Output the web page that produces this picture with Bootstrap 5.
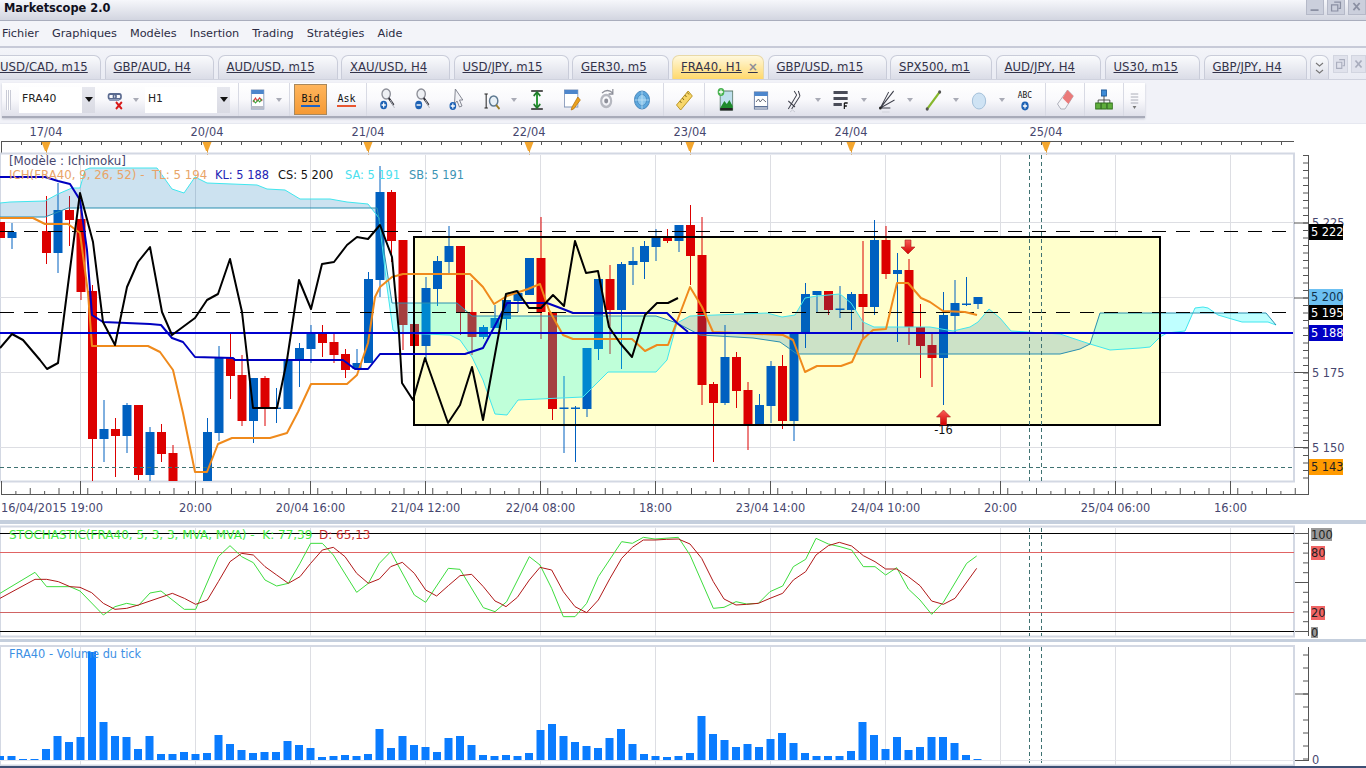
<!DOCTYPE html>
<html lang="fr">
<head>
    <meta charset="UTF-8">
    <meta name="viewport" content="width=device-width, initial-scale=1.0">
    <title>Marketscope 2.0</title>
    <link rel="stylesheet" href="https://cdn.jsdelivr.net/npm/bootstrap@5.3.0/dist/css/bootstrap.min.css">
    <style>
        html, body { height: 768px; overflow: hidden; }
        body { background: #fff; font-family: "DejaVu Sans", "Liberation Sans", sans-serif; font-size: 11.3px; color: #2c2c44; }
        .mk-title { height: 21px; background: linear-gradient(#f6f7fb, #d2d5e0); border-bottom: 1px solid #a9adbd; padding-left: 4px; }
        .mk-title b { font: bold 11.4px "DejaVu Sans", sans-serif; color: #10101c; padding-top: 1px; }
        .mk-winbtn { width: 18px; height: 15px; background: #cbcfdc; border: 1px solid #b5b9c8; border-top: 0; margin-left: 3px; }
        .mk-winbtn svg { width: 100%; height: 100%; display: block; }
        .mk-menu { height: 27px; background: #f3f4f9; border-bottom: 2px solid #c7cad8; padding: 1px 0 0 2px; gap: 13px; }
        .mk-tabs { height: 32px; background: linear-gradient(#f3f4f9, #e9ebf3); border-bottom: 1px solid #cfd2de; padding-top: 7px; }
        .mk-tab { height: 25px; margin-right: 3.5px; border: 1px solid #c9ccd9; border-bottom: 0; border-radius: 7px 7px 0 0; background: linear-gradient(#fafbfd, #d9dbe6); color: #33334a; padding: 0 0 0 8px; white-space: nowrap; flex: none; font-size: 11.7px; }
        .mk-tab.active { background: linear-gradient(#fff8dc, #ffd766); border-color: #e8d9a8; color: #33334a; }
        .mk-tab i { font-style: normal; font-weight: bold; color: #8c8c98; margin-left: 6px; }
        .mk-chev { width: 19px; padding: 0; }
        .mk-chev svg { width: 9px; height: 16px; }
        .mk-first { margin-left: -9px; width: 110px; }
        .mk-tbwrap { height: 43px; background: #f1f2f8; padding: 3px 0 0 2px; }
        .mk-toolbar { width: 1143px; height: 35px; background: linear-gradient(#fff 0, #f9f9fc 50%, #dfe0ea 100%); border-bottom: 2px solid #a8abb9; box-shadow: 0 1px 2px #c4c6d2; }
        .mk-grip { width: 17px; height: 100%; }
        .mk-grip::before { content: ""; display: block; width: 5px; height: 20px; margin-left: 4px; background: repeating-linear-gradient(90deg, #c9cbd6 0 1px, #fff 1px 2px); }
        .mk-combo { height: 26px; background: #fff; flex: none; padding-left: 3px; color: #222; font-size: 10.8px; }
        .mk-combo span { width: 13px; height: 26px; margin-left: auto; background: linear-gradient(#e6e7ee, #d9dae3); display: flex; align-items: center; justify-content: center; }
        .mk-combo span::after { content: ""; border: 4px solid transparent; border-top: 5px solid #111; border-bottom: 0; }
        .mk-sep { width: 1px; height: 33px; background: #d8dae4; flex: none; }
        .mk-it { flex: none; height: 33px; display: flex; align-items: center; justify-content: center; }
        .mk-it svg { width: 20px; height: 26px; display: block; }
        .mk-caret { flex: none; width: 12px; height: 33px; display: flex; align-items: center; justify-content: center; }
        .mk-caret::after { content: ""; border: 3px solid transparent; border-top: 4px solid #a9abb6; border-bottom: 0; }
        .w-22 { width: 22px; } .w-34 { width: 34px; } .w-35 { width: 35px; } .w-38 { width: 38px; } .w-40 { width: 40px; }
        .mk-wide { width: 20px; }
        .mk-mid { width: 18px; }
        .mk-narrow { width: 10px; }
        .mk-l2 { margin-left: 2px; } .mk-l3 { margin-left: 3px; } .mk-l4 { margin-left: 4px; } .mk-l10 { margin-left: 10px; }
        .mk-bid { width: 33px; height: 31px; padding: 0; margin: 0 0 0 4px; flex: none; background: linear-gradient(#ffb55c, #f59a35); border: 1px solid #a9885c; border-radius: 0; line-height: 1; }
        .mk-ask { width: 39px; height: 33px; flex: none; }
        .mk-bidtxt { font: 10px "DejaVu Sans Mono", monospace; color: #111; padding-bottom: 1px; }
        .mk-bid .mk-bidtxt { border-bottom: 2px solid #1c62c4; }
        .mk-ask .mk-bidtxt { border-bottom: 2px solid #e8552f; }
        .mk-chart { display: block; width: 1366px; background: #fff; }
        .mk-chart text { font: 11.4px "DejaVu Sans", sans-serif; fill: #46466e; }
        .mk-chart text.mk-model { font-size: 11.8px; }
        .mk-chart text.mk-stleg { font-size: 12px; }
        .mk-bar { height: 4px; background: #c5cfdd; }
        .mk-bar2 { height: 3px; background: #c5cfdd; }
    </style>
</head>
<body>
    <svg width="0" height="0" class="position-absolute">
        <defs>
            <linearGradient id="redg" x1="0" x2="0" y1="0" y2="1"><stop offset="0" stop-color="#f8605a"/><stop offset="1" stop-color="#d40000"/></linearGradient>
        </defs>
        <symbol id="i-link" viewBox="0 0 24 26" preserveAspectRatio="none"><g fill="none" stroke="#5a6a90" stroke-width="2"><rect x="3" y="7" width="9" height="5" rx="2"/><rect x="9" y="7" width="9" height="5" rx="2"/></g><rect x="4" y="12" width="12" height="2" fill="#8d9ab8"/><path d="M12 15l7 7M19 15l-7 7" stroke="#d81818" stroke-width="2.4"/></symbol>
        <symbol id="i-win" viewBox="0 0 24 26" preserveAspectRatio="none"><rect x="4" y="3" width="15" height="19" fill="#fff" stroke="#7f93b5"/><rect x="4" y="3" width="15" height="4" fill="#4d86cc"/><path d="M6 15l3-4 2 3 3-3 3 3" fill="none" stroke="#d83a3a" stroke-width="1.3"/><path d="M6 13l3 3 3-3 2 2 3-3" fill="none" stroke="#3aa640" stroke-width="1.1"/><rect x="4" y="19" width="15" height="3" fill="#b9bdc9"/></symbol>
        <symbol id="i-zin" viewBox="0 0 24 26" preserveAspectRatio="none"><circle cx="11" cy="7" r="5" fill="#eef0f4" stroke="#8d8f98" stroke-width="1.6"/><path d="M14 11l6 7" stroke="#303038" stroke-width="2.2"/><path d="M16 13l5 8" stroke="#b5b8c2" stroke-width="1"/><circle cx="8" cy="18" r="4.2" fill="#1d62b5"/><path d="M5.5 18h5M8 15.5v5" stroke="#fff" stroke-width="1.4"/></symbol>
        <symbol id="i-zout" viewBox="0 0 24 26" preserveAspectRatio="none"><circle cx="11" cy="7" r="5" fill="#eef0f4" stroke="#8d8f98" stroke-width="1.6"/><path d="M14 11l6 7" stroke="#303038" stroke-width="2.2"/><path d="M16 13l5 8" stroke="#b5b8c2" stroke-width="1"/><circle cx="8" cy="18" r="4.2" fill="#1d62b5"/><path d="M5.5 18h5" stroke="#fff" stroke-width="1.4"/></symbol>
        <symbol id="i-cur" viewBox="0 0 24 26" preserveAspectRatio="none"><path d="M10 2l9 11h-4l3 6-3 1-3-6-3 3z" fill="#f2f3f7" stroke="#7b7e8a"/><circle cx="7" cy="19" r="4" fill="#1d62b5"/><path d="M4.5 19h5M7 16.5v5" stroke="#fff" stroke-width="1.4"/></symbol>
        <symbol id="i-izoom" viewBox="0 0 24 26" preserveAspectRatio="none"><path d="M5 7v14M3 7h4M3 21h4" stroke="#222" stroke-width="1.2" fill="none"/><circle cx="14" cy="14" r="5" fill="#e8f0f7" stroke="#5d7890" stroke-width="1.7"/><path d="M17 18l4 4" stroke="#9a7b22" stroke-width="2"/></symbol>
        <symbol id="i-ibar" viewBox="0 0 24 26" preserveAspectRatio="none"><path d="M5 4h14M5 22h14" stroke="#222" stroke-width="1.6"/><path d="M12 5v16" stroke="#2e9a3a" stroke-width="2.4"/><path d="M8 9l4-4 4 4M8 17l4 4 4-4" fill="none" stroke="#1f7a2a" stroke-width="1.8"/></symbol>
        <symbol id="i-wkey" viewBox="0 0 24 26" preserveAspectRatio="none"><rect x="3" y="3" width="16" height="17" fill="#fff" stroke="#7f93b5"/><rect x="3" y="3" width="16" height="4" fill="#4d86cc"/><path d="M19 10l3 3-8 9-3 1 1-3z" fill="#eba21f" stroke="#b3700c" stroke-width=".8"/></symbol>
        <symbol id="i-eye" viewBox="0 0 24 26" preserveAspectRatio="none"><circle cx="11" cy="14" r="6" fill="none" stroke="#b6b8c0" stroke-width="2.6"/><circle cx="11" cy="14" r="2.4" fill="#8d8f99"/><path d="M6 6c4-3 9-3 13 0M19 2v5h-5" fill="none" stroke="#8d8f99" stroke-width="1.5"/></symbol>
        <symbol id="i-globe" viewBox="0 0 24 26" preserveAspectRatio="none"><circle cx="12" cy="13" r="9" fill="#5da7dd" stroke="#3c7fb6"/><circle cx="12" cy="13" r="5.5" fill="#8cc6ec" stroke="#3c7fb6" stroke-width=".7"/><path d="M3 13h18M12 4v18" stroke="#c5e3f6" stroke-width=".8"/></symbol>
        <symbol id="i-ruler" viewBox="0 0 24 26" preserveAspectRatio="none"><path d="M3 18L17 4l5 5L8 23z" fill="#f7d66a" stroke="#b78f1c"/><path d="M7 14l2 2M10 11l2 2M13 8l2 2M16 5.500l2 2" stroke="#7a5f10"/></symbol>
        <symbol id="i-pic" viewBox="0 0 24 26" preserveAspectRatio="none"><rect x="5" y="4" width="15" height="19" fill="#bfe0ee" stroke="#5a7a68"/><path d="M5 21l5-7 3 3 3-4 4 6v2H5z" fill="#1e8a2c"/><rect x="5" y="21" width="15" height="2.500" fill="#222"/><circle cx="6" cy="5" r="4" fill="#47b24f"/><path d="M3.500 5h5M6 2.500v5" stroke="#fff" stroke-width="1.3"/></symbol>
        <symbol id="i-wchart" viewBox="0 0 24 26" preserveAspectRatio="none"><rect x="4" y="5" width="16" height="17" fill="#fff" stroke="#5a6f95"/><rect x="4" y="5" width="16" height="4" fill="#4d86cc"/><path d="M6 15l3-3 2 3 3-3 4 3" fill="none" stroke="#5a5f6e"/><rect x="4" y="19" width="16" height="1.500" fill="#5a6f95"/></symbol>
        <symbol id="i-fork" viewBox="0 0 24 26" preserveAspectRatio="none"><path d="M4 22L14 8M8 22l10-13M4 14l8 6M11 4l3 4M16 4l2 5" fill="none" stroke="#3d3f4a" stroke-width="1.2"/><path d="M6 25l3-2 3 2" fill="none" stroke="#c5c7d0"/></symbol>
        <symbol id="i-fib" viewBox="0 0 24 26" preserveAspectRatio="none"><rect x="3" y="4" width="17" height="3" fill="#4a4c58"/><rect x="3" y="10" width="17" height="3" fill="#4a4c58"/><rect x="3" y="16" width="10" height="3" fill="#4a4c58"/><path d="M16 16h4M16 16v6M16 19h3" stroke="#111" stroke-width="1.4" fill="none"/></symbol>
        <symbol id="i-fan" viewBox="0 0 24 26" preserveAspectRatio="none"><path d="M4 21L20 4M4 21L14 5M4 21L21 13M4 21h12" fill="none" stroke="#3d3f4a" stroke-width="1.1"/><circle cx="4" cy="21" r="1.600" fill="#222"/><path d="M6 25h9" stroke="#cfd1d9"/></symbol>
        <symbol id="i-line" viewBox="0 0 24 26" preserveAspectRatio="none"><path d="M5 22L20 5" stroke="#86b72c" stroke-width="2.6"/><circle cx="5" cy="22" r="1.800" fill="#555"/><circle cx="20" cy="5" r="1.800" fill="#555"/></symbol>
        <symbol id="i-circ" viewBox="0 0 24 26" preserveAspectRatio="none"><circle cx="12" cy="14" r="8" fill="#cfe3f4" stroke="#9fbcd6"/></symbol>
        <symbol id="i-plusb" viewBox="0 0 24 26" preserveAspectRatio="none"><circle cx="12" cy="19" r="4.400" fill="#1d62b5"/><path d="M9.500 19h5M12 16.500v5" stroke="#fff" stroke-width="1.4"/></symbol>
        <symbol id="i-eras" viewBox="0 0 24 26" preserveAspectRatio="none"><path d="M15 3l7 6-10 13H7l-4-5z" fill="#f5f5f8" stroke="#a9abb6"/><path d="M15 3l7 6-6 8-7-6z" fill="#ea7a7a"/></symbol>
        <symbol id="i-org" viewBox="0 0 24 26" preserveAspectRatio="none"><rect x="9" y="3" width="6" height="6" fill="#3d8ad6" stroke="#1f5a9a"/><path d="M12 9v4M5 16v-3h14v3M12 13v3" fill="none" stroke="#444"/><g fill="#5fae3c" stroke="#2f6f1a"><rect x="2" y="16" width="6" height="6"/><rect x="9" y="16" width="6" height="6"/><rect x="16" y="16" width="6" height="6"/></g></symbol>
        <symbol id="i-over" viewBox="0 0 24 26" preserveAspectRatio="none"><path d="M6 7h12M6 10h12M6 13h12M6 16h12" stroke="#9a9ca8"/><path d="M9 19h6l-3 3z" fill="#777"/></symbol>
    </svg>

    <div class="mk-title d-flex align-items-start">
        <b>Marketscope 2.0</b>
        <div class="d-flex ms-auto">
            <div class="mk-winbtn"><svg viewBox="0 0 18 15"><rect x="4" y="10" width="9" height="2" fill="#8b90a3"/></svg></div>
            <div class="mk-winbtn"><svg viewBox="0 0 18 15"><path d="M7 2h7v7h-2M4 5h7v7H4z" fill="none" stroke="#8b90a3" stroke-width="1.400"/></svg></div>
            <div class="mk-winbtn"><svg viewBox="0 0 18 15"><path d="M5 3l7 8M12 3l-7 8" stroke="#8b90a3" stroke-width="2"/></svg></div>
        </div>
    </div>

    <div class="mk-menu d-flex align-items-center">
        <span>Fichier</span><span>Graphiques</span><span>Modèles</span><span>Insertion</span><span>Trading</span><span>Stratégies</span><span>Aide</span>
    </div>

    <div class="mk-tabs d-flex overflow-hidden">
        <a class="mk-tab mk-first d-flex align-items-center">USD/CAD, m15</a>
        <a class="mk-tab d-flex align-items-center" style="width:109.5px">GBP/AUD, H4</a>
        <a class="mk-tab d-flex align-items-center" style="width:120px">AUD/USD, m15</a>
        <a class="mk-tab d-flex align-items-center" style="width:109px">XAU/USD, H4</a>
        <a class="mk-tab d-flex align-items-center" style="width:115px">USD/JPY, m15</a>
        <a class="mk-tab d-flex align-items-center" style="width:96.5px">GER30, m5</a>
        <a class="mk-tab active d-flex align-items-center" style="width:92px">FRA40, H1<i>×</i></a>
        <a class="mk-tab d-flex align-items-center" style="width:119px">GBP/USD, m15</a>
        <a class="mk-tab d-flex align-items-center" style="width:102px">SPX500, m1</a>
        <a class="mk-tab d-flex align-items-center" style="width:105.5px">AUD/JPY, H4</a>
        <a class="mk-tab d-flex align-items-center" style="width:95.5px">US30, m15</a>
        <a class="mk-tab d-flex align-items-center" style="width:103px">GBP/JPY, H4</a>
        <a class="mk-tab mk-chev d-flex align-items-center justify-content-center"><svg viewBox="0 0 9 16"><path d="M1 3l3.500 3 3.500-3M1 10l3.500 3 3.500-3" fill="none" stroke="#777" stroke-width="1.100"/></svg></a>
        <div class="mk-winbtn ms-0" style="width:15px;height:18px;background:#e0e2ec;border:1px solid #d2d5e0"><svg viewBox="0 0 15 18"><path d="M6 4h6v7h-2M3 7h6v7H3z" fill="none" stroke="#a9adbd" stroke-width="1.300"/></svg></div>
        <div class="mk-winbtn" style="width:15px;height:18px;background:#e0e2ec;border:1px solid #d2d5e0"><svg viewBox="0 0 15 18"><path d="M4 5l7 8M11 5l-7 8" stroke="#a9adbd" stroke-width="2"/></svg></div>
    </div>

    <div class="mk-tbwrap">
        <div class="mk-toolbar d-flex align-items-center">
            <div class="mk-grip d-flex align-items-center"></div>
            <div class="mk-combo d-flex align-items-center" style="width:76px">FRA40<span></span></div>
            <div class="mk-it w-22 mk-l10"><svg><use href="#i-link"/></svg></div>
            <div class="mk-caret mk-mid"></div>
            <div class="mk-combo d-flex align-items-center" style="width:85px">H1<span></span></div>
            <div class="mk-sep mx-2"></div>
            <div class="mk-it w-22"><svg><use href="#i-win"/></svg></div>
            <div class="mk-caret mk-wide"></div>
            <div class="mk-sep"></div>
            <button class="btn mk-bid d-flex align-items-center justify-content-center"><span class="mk-bidtxt">Bid</span></button>
            <div class="mk-ask d-flex align-items-center justify-content-center"><span class="mk-bidtxt">Ask</span></div>
            <div class="mk-sep"></div>
            <div class="mk-it w-35 mk-l2"><svg><use href="#i-zin"/></svg></div>
            <div class="mk-it w-35"><svg><use href="#i-zout"/></svg></div>
            <div class="mk-it w-35"><svg><use href="#i-cur"/></svg></div>
            <div class="mk-it w-35"><svg><use href="#i-izoom"/></svg></div>
            <div class="mk-caret mk-narrow"></div>
            <div class="mk-it w-35"><svg><use href="#i-ibar"/></svg></div>
            <div class="mk-it w-35"><svg><use href="#i-wkey"/></svg></div>
            <div class="mk-it w-35"><svg><use href="#i-eye"/></svg></div>
            <div class="mk-it w-35"><svg><use href="#i-globe"/></svg></div>
            <div class="mk-sep mk-l4"></div>
            <div class="mk-it w-40"><svg><use href="#i-ruler"/></svg></div>
            <div class="mk-sep"></div>
            <div class="mk-it w-35 mk-l3"><svg><use href="#i-pic"/></svg></div>
            <div class="mk-it w-35"><svg><use href="#i-wchart"/></svg></div>
            <div class="mk-it w-34"><svg><use href="#i-fork"/></svg></div>
            <div class="mk-caret"></div>
            <div class="mk-it w-34"><svg><use href="#i-fib"/></svg></div>
            <div class="mk-caret"></div>
            <div class="mk-it w-34"><svg><use href="#i-fan"/></svg></div>
            <div class="mk-caret"></div>
            <div class="mk-it w-34"><svg><use href="#i-line"/></svg></div>
            <div class="mk-caret"></div>
            <div class="mk-it w-34"><svg><use href="#i-circ"/></svg></div>
            <div class="mk-caret"></div>
            <div class="mk-it w-34"><svg viewBox="0 0 24 26" preserveAspectRatio="none"><text x="12" y="11" text-anchor="middle" font-family="DejaVu Sans Mono" font-size="9.500" fill="#111">ABC</text><use href="#i-plusb"/></svg></div>
            <div class="mk-sep mk-l3"></div>
            <div class="mk-it w-38"><svg><use href="#i-eras"/></svg></div>
            <div class="mk-sep"></div>
            <div class="mk-it w-38"><svg><use href="#i-org"/></svg></div>
            <div class="mk-sep"></div>
            <div class="mk-it flex-fill"><svg style="width:15px"><use href="#i-over"/></svg></div>
        </div>
    </div>

    <svg id="main" class="mk-chart" height="397" viewBox="0 123 1366 397">
        <defs><clipPath id="clipMain"><rect x="0" y="155" width="1294" height="326"/></clipPath></defs>
        <g id="topAxis"></g>
        <rect x="0" y="153.500" width="1294" height="328" fill="none" stroke="#d3d8e3" stroke-width="2"/>
        <g id="mainPlot" clip-path="url(#clipMain)"></g>
        <g id="mainAxis"></g>
        <text x="9" y="165" class="mk-model">[Modèle : Ichimoku]</text>
        <text x="9" y="179" class="mk-model" style="fill:#e8a468">ICH(FRA40, 9, 26, 52) -&#160;&#160;TL: 5 194</text>
        <text x="215" y="179" style="fill:#2323b4">KL: 5 188</text>
        <text x="278" y="179" style="fill:#111">CS: 5 200</text>
        <text x="345" y="179" style="fill:#4ae0ee">SA: 5 191</text>
        <text x="409" y="179" style="fill:#3c94b4">SB: 5 191</text>
        <path d="M905 240h6v7h4l-7 7-7-7h4z" fill="url(#redg)" stroke="#b02020" stroke-width=".6"/>
        <path d="M940.500 425v-8h-4l7-7 7 7h-4v8z" fill="url(#redg)" stroke="#b02020" stroke-width=".6"/>
        <text x="943.500" y="434" text-anchor="middle" style="fill:#111">-16</text>
    </svg>
    <div class="mk-bar"></div>
    <svg id="stoch" class="mk-chart" height="115" viewBox="0 524 1366 115">
        <g id="stochPlot"></g>
        <text x="9" y="539" class="mk-stleg" style="fill:#45e845">STOCHASTIC(FRA40, 5, 3, 3, MVA, MVA) -&#160;&#160;K: 77,39</text>
        <text x="319" y="539" class="mk-stleg" style="fill:#c83030">D: 65,13</text>
    </svg>
    <div class="mk-bar2"></div>
    <svg id="vol" class="mk-chart" height="126" viewBox="0 642 1366 126">
        <g id="volPlot"></g>
        <text x="9" y="658" style="fill:#3d8fe4">FRA40 - Volume du tick</text>
    </svg>

    <script src="https://cdn.jsdelivr.net/npm/bootstrap@5.3.0/dist/js/bootstrap.bundle.min.js"></script>
    <script>
        const GRID_X = [80.5, 195.5, 310.5, 425.5, 540.5, 655.5, 770.5, 885.5, 1000.5, 1115.5, 1230.5];

        // candles: [index, body top, body bottom, wick top, wick bottom, colour]
        const candles = [
            [0,222,238,222,238,'r'],[1,232,238,223,249,'b'],[4,231,253,196,264,'r'],[5,210,253,183,273,'b'],[6,210,220,196,246,'r'],
            [7,219,292,210,300,'r'],[8,291,439,285,481,'r'],[9,429,439,400,462,'b'],[10,429,436,418,477,'r'],[11,405,436,403,453,'b'],
            [12,405,475,405,480,'r'],[13,432,475,427,481,'b'],[14,432,454,424,462,'r'],[15,453,481,445,481,'r'],[18,432,481,418,481,'b'],
            [19,358,433,346,441,'b'],[20,358,376,333,399,'r'],[21,375,421,355,426,'r'],[22,378,421,378,443,'b'],[23,378,408,376,426,'r'],
            [24,407.500,409,388,423,'b'],[25,360,409,360,409,'b'],[26,348,360,343,387,'b'],[27,333,349,325,363,'b'],[28,333,343,325,357,'r'],
            [29,342,355,333,363,'r'],[30,354,370,349,378,'r'],[31,363,369,349,369,'b'],[32,279,363,272,363,'b'],[33,192,280,166,297,'b'],
            [34,192,241,190,262,'r'],[35,240,325,240,350,'r'],[36,324,346,324,352,'r'],[37,288,346,277,360,'b'],[38,261,289,256,306,'b'],
            [39,246,262,226,273,'b'],[40,246,312,246,335,'r'],[41,312,337,280,355,'r'],[42,327,337,325,339,'b'],[43,318,328,305,328,'b'],
            [44,300,319,300,330,'b'],[45,293,301,290,312,'b'],[46,258,295,258,295,'b'],[47,258,312,217,339,'r'],[48,312,409,312,420,'r'],
            [49,407.500,409,376,453,'b'],[50,407.500,409,406,462,'b'],[51,348,409,348,417,'b'],[52,279,349,279,360,'b'],[53,279,310,265,354,'r'],
            [54,264,310,262,369,'b'],[55,261,265,247,285,'b'],[56,246,262,241,279,'b'],[57,237,247,229,261,'b'],[58,237,241,229,243,'r'],
            [59,225,241,225,252,'b'],[60,225,256,205,285,'r'],[61,255,385,217,405,'r'],[62,384,403,382,462,'r'],[63,357,403,325,405,'b'],
            [64,357,391,352,408,'r'],[65,390,424,382,450,'r'],[66,405,424,394,426,'b'],[67,366,406,361,423,'b'],[68,366,421,355,429,'r'],
            [69,332,421,332,441,'b'],[70,294,332,283,348,'b'],[71,291,295,291,312,'b'],[72,291,310,291,315,'r'],[73,308.500,310,286,318,'b'],
            [74,294,310,292,330,'b'],[75,294,307,241,339,'r'],[76,240,307,220,315,'b'],[77,240,274,226,279,'r'],[78,270,274,253,342,'b'],
            [79,270,327,259,345,'r'],[80,327,346,304,378,'r'],[81,345,358,334,387,'r'],[82,315,358,292,405,'b'],[83,303,316,280,332,'b'],
            [84,303.500,305,277,306,'b'],[85,297,304,297,309,'b']
        ];

        const pts = a => a.map(p => p.join(',')).join(' ');
        const pl = (a, colour, w) => `<polyline points="${pts(a)}" fill="none" stroke="${colour}" stroke-width="${w}" stroke-linejoin="round"/>`;
        const ln = (x1, y1, x2, y2, colour, extra) => `<line x1="${x1}" y1="${y1}" x2="${x2}" y2="${y2}" stroke="${colour}" ${extra || ''}/>`;
        const gridV = (y1, y2) => GRID_X.map(x => ln(x, y1, x, y2, '#dddee3')).join('');
        const dashV = (y1, y2) => [1029.5, 1041.5].map(x => ln(x, y1, x, y2, '#3f7272', 'stroke-dasharray="4 3"')).join('');

        // clouds
        const sa1 = [[0,203],[10,202],[45,201],[58,194],[72,188],[80,188],[85,170],[90,168],[157,168],[172,189],[184,193],[195,177],[207,183],[257,185],[267,189],[285,190],[300,199],[330,199],[347,202],[368,204],[379,218]];
        const sb1 = [[0,217],[45,217],[58,212],[68,208],[377,208],[379,218]];
        const sb2 = [[379,218],[392,303],[457,303],[472,316],[656,316],[677,323]];
        const sa2 = [[379,218],[387,287],[393,330],[397,333],[450,335],[460,340],[472,357],[483,380],[495,414],[507,415],[518,400],[583,397],[608,372],[656,372],[667,360],[677,323]];
        const sa3 = [[677,323],[690,316],[767,313],[782,317],[795,315],[805,298],[817,296],[840,294],[851,303],[863,322],[874,327],[930,327],[953,331],[970,327],[978,322],[989,309],[1000,318],[1011,331],[1060,334],[1090,344]];
        const sb3 = [[677,323],[700,335],[753,338],[780,342],[797,354],[1060,354],[1080,349],[1090,344]];
        const sb4 = [[1090,344],[1100,313],[1266,313],[1276,325]];
        const sa4 = [[1090,344],[1110,350],[1140,348],[1150,347],[1160,337],[1167,333],[1185,331],[1195,308],[1203,307],[1208,308],[1218,315],[1242,322],[1268,322],[1276,325]];
        const poly = (a, b, fill) => `<polygon points="${pts(a.concat(b.slice().reverse()))}" fill="${fill}"/>`;

        const black = [[0,348],[12,334],[23,340],[40,360],[47,369],[58,363],[69,277],[80,193],[93,242],[103,322],[115,345],[127,287],[138,262],[150,247],[162,312],[172,335],[195,318],[207,300],[218,294],[230,259],[242,312],[253,408],[277,408],[287,360],[299,280],[311,309],[322,264],[334,262],[347,245],[357,237],[368,239],[380,225],[392,257],[399,333],[402,383],[413,400],[425,358],[448,423],[460,405],[472,367],[483,420],[506,294],[517,291],[529,308],[541,308],[553,295],[564,306],[575,241],[586,273],[598,271],[609,327],[620,343],[632,357],[645,315],[657,303],[668,303],[678,298]];
        const blue = [[0,177],[45,177],[58,181],[70,184],[80,200],[87,250],[92,315],[103,322],[150,324],[161,325],[172,338],[183,342],[195,357],[233,358],[235,360],[343,360],[355,369],[368,369],[380,354],[465,354],[483,348],[507,303],[547,303],[563,309],[573,313],[667,313],[677,323],[688,332]];
        const orange = [[0,218],[33,218],[45,224],[68,224],[80,233],[88,293],[92,346],[148,346],[160,352],[173,370],[183,413],[195,472],[207,472],[218,444],[232,438],[270,438],[287,433],[298,412],[311,384],[347,384],[357,375],[368,343],[375,297],[380,287],[392,277],[403,274],[470,274],[483,287],[494,304],[507,296],[528,289],[540,284],[549,310],[563,335],[573,339],[632,339],[645,351],[657,345],[668,345],[690,287],[702,307],[713,332],[783,335],[793,340],[805,372],[817,366],[841,366],[852,362],[862,340],[873,330],[886,329],[897,283],[908,283],[921,298],[930,302],[943,311],[965,312],[977,315]];

        let h = gridV(155, 481);
        [222.5, 297.5, 372.5, 447.5].forEach(y => h += ln(0, y, 1294, y, '#dddee3'));
        h += '<rect x="414" y="237" width="746" height="188" fill="#ffffcc"/>';
        candles.forEach(c => {
            const x = 11.5 * c[0] + 0.5, col = c[5] === 'r' ? '#dc0000' : '#0060c0';
            h += ln(x, c[3], x, c[4], col);
            h += `<rect x="${x - 4.5}" y="${c[1]}" width="9" height="${c[2] - c[1]}" fill="${col}"/>`;
        });
        h += poly(sa1, sb1, 'rgba(0,110,180,.2)') + poly(sb2, sa2, 'rgba(0,255,255,.25)');
        h += poly(sa3, sb3, 'rgba(0,110,180,.2)') + poly(sb4, sa4, 'rgba(0,255,255,.25)');
        [[sa1, sa2, sa3, sa4], [sb1, sb2, sb3, sb4]].forEach((set, k) => set.forEach(s => h += pl(s, k ? '#2a8fb0' : '#40e6ee', 1)));
        h += '<rect x="414" y="237" width="746" height="188" fill="none" stroke="#000" stroke-width="2"/>';
        h += ln(0, 231.5, 1291, 231.5, '#000', 'stroke-dasharray="14 10"');
        h += ln(0, 312.5, 1291, 312.5, '#000', 'stroke-dasharray="14 10"');
        h += ln(0, 467.5, 1294, 467.5, '#3f7272', 'stroke-dasharray="4 3"');
        h += dashV(155, 481);
        h += pl(orange, '#ef8a1c', 2) + ln(0, 333, 1293, 333, '#0000d0', 'stroke-width="2"') + pl(blue, '#0000c0', 2) + pl(black, '#000', 2);
        document.getElementById('mainPlot').innerHTML = h;

        // top date strip
        h = ln(1, 141.5, 1294, 141.5, '#555');
        for (let x = 1.5; x < 1294; x += 20) h += ln(x, 141, x, 145, '#555');
        h += ln(1.5, 141, 1.5, 154, '#555');
        [['17/04',46],['20/04',207],['21/04',368],['22/04',529],['23/04',690],['24/04',851],['25/04',1046]].forEach(d => {
            h += `<text x="${d[1]}" y="136" text-anchor="middle">${d[0]}</text>`;
            h += `<path d="M${d[1] - 4.5} 142h9l-3.5 9h-2z" fill="#f4a62e"/>` + ln(d[1] + 0.5, 150, d[1] + 0.5, 155, '#e09a30');
        });
        h = '<rect x="0" y="123" width="1366" height="1" fill="#e6e8f0"/>' + h;
        document.getElementById('topAxis').innerHTML = h;

        // price axis and bottom time axis
        h = ln(1308.5, 155, 1308.5, 494.5, '#555');
        for (let y = 155.5; y < 481; y += 7.5) h += ln(1303, y, 1308, y, '#555');
        [223, 298, 372.5, 447.5].forEach(y => h += ln(1294, y, 1308, y, '#555'));
        h += ln(1, 494.5, 1309, 494.5, '#555');
        for (let x = 1.5, i = 0; x < 1308; x += 14.375, i++) h += ln(x, i % 2 ? 491 : 488, x, 494, '#555');
        h += ln(1.5, 481, 1.5, 494, '#555');
        GRID_X.forEach(x => h += ln(x, 481, x, 494, '#555'));
        [['20:00',195.5],['20/04 16:00',310.5],['21/04 12:00',425.5],['22/04 08:00',540.5],['18:00',655.5],['23/04 14:00',770.5],['24/04 10:00',885.5],['20:00',1000.5],['25/04 06:00',1115.5],['16:00',1230.5]]
            .forEach(t => h += `<text x="${t[1]}" y="512" text-anchor="middle">${t[0]}</text>`);
        h += '<text x="1" y="512">16/04/2015 19:00</text>';
        h += '<text x="1312" y="227">5 225</text><text x="1312" y="377">5 175</text><text x="1312" y="452">5 150</text>';
        [[224,16,'#000','#fff','5 222'],[289,16,'#6cc0f2','#10304a','5 200'],[305,15,'#000','#fff','5 195'],[325,16,'#0000c4','#fff','5 188'],[459,16,'#ff9a00','#222','5 143']].forEach(t => {
            h += `<rect x="1309" y="${t[0]}" width="34" height="${t[1]}" fill="${t[2]}"/><text x="1311" y="${t[0] + 12}" style="fill:${t[3]}">${t[4]}</text>`;
        });
        document.getElementById('mainAxis').innerHTML = h;

        // stochastic, points read at 3x from the top of the pane
        const z = (a, dx) => a.map(p => [(p[0] + dx) / 3, p[1] / 3 + 515]);
        const kA = [[0,235],[105,172],[140,215],[210,215],[240,228],[310,300],[345,275],[380,265],[415,272],[450,234],[483,228],[553,283],[587,283],[655,125],[690,92],[725,125],[760,143],[795,195],[830,213],[865,205],[900,145],[932,85],[967,85],[1000,120],[1070,232],[1105,205],[1138,145],[1172,110],[1243,240],[1277,262],[1345,160],[1380,163],[1450,278],[1485,290]];
        const kB = [[20,260],[88,125],[120,150],[155,220],[190,305],[225,305],[260,265],[295,185],[365,80],[397,85],[430,67],[465,72],[535,67],[570,120],[640,280],[672,277],[708,260],[740,267],[775,265],[810,230],[848,213],[880,155],[917,133],[948,70],[985,87],[1020,95],[1055,105],[1090,155],[1125,155],[1157,180],[1190,158],[1225,222],[1260,255],[1295,298],[1330,262],[1400,145],[1430,123]];
        const dA = [[0,250],[105,193],[140,193],[175,200],[210,215],[240,217],[275,233],[310,265],[345,283],[380,280],[415,270],[450,258],[517,235],[553,250],[587,268],[622,255],[655,200],[690,140],[725,115],[760,120],[795,155],[830,180],[865,205],[900,185],[932,145],[967,105],[1000,97],[1035,125],[1070,175],[1105,205],[1138,192],[1172,155],[1207,142],[1243,175],[1277,225],[1310,243],[1345,212],[1380,182],[1415,178],[1450,215],[1485,258]];
        const dB = [[0,265],[18,275],[52,247],[88,195],[120,157],[155,165],[190,230],[225,275],[260,293],[295,255],[330,190],[365,130],[397,97],[430,75],[465,75],[500,73],[535,72],[570,87],[605,130],[640,200],[672,252],[708,270],[740,268],[775,265],[810,250],[848,235],[880,195],[917,170],[948,120],[985,92],[1018,82],[1055,93],[1090,122],[1125,140],[1157,162],[1190,162],[1225,185],[1260,212],[1295,258],[1330,268],[1365,250],[1430,160]];

        h = '<rect x="0" y="526.500" width="1294" height="110" fill="none" stroke="#d3d8e3" stroke-width="2"/>' + gridV(528, 636) + dashV(528, 636);
        h += ln(0, 533.5, 1294, 533.5, '#000') + ln(0, 631.5, 1294, 631.5, '#000');
        h += ln(0, 552.5, 1294, 552.5, '#e06464') + ln(0, 612.5, 1294, 612.5, '#d06464');
        h += pl(z(kA, 0).concat(z(kB, 1500)), '#3ddc3d', 1) + pl(z(dA, 0).concat(z(dB, 1500)), '#b01818', 1);
        h += ln(1308.5, 528, 1308.5, 636, '#555');
        for (let i = 0; i <= 10; i++) {
            const y = 533.5 + i * 9.8, long = i % 5 === 0;
            h += ln(long ? 1295 : 1303, y, 1308, y, '#555');
        }
        [[1311,528,21,13,'#999','100',539],[1311,546,14,14,'#f06464','80',557],[1311,606,14,14,'#f06464','20',617],[1311,627,7,11,'#999','0',636.5]].forEach(t => {
            h += `<rect x="${t[0]}" y="${t[1]}" width="${t[2]}" height="${t[3]}" fill="${t[4]}"/><text x="${t[0]}" y="${t[6]}" style="fill:#222">${t[5]}</text>`;
        });
        document.getElementById('stochPlot').innerHTML = h;

        // volume
        const vols = [[0,4],[1,4],[2,1],[3,1],[4,11],[5,24],[6,18],[7,23],[8,108],[9,38],[10,24],[11,23],[12,11],[13,24],[14,6],[15,6],[16,8],[17,6],[18,7],[19,25],[20,16],[21,10],[22,7],[23,8],[24,8],[25,19],[26,15],[27,12],[28,3],[29,4],[30,5],[31,4],[32,6],[33,31],[34,12],[35,24],[36,15],[37,13],[38,8],[39,22],[40,24],[41,15],[42,5],[43,4],[44,5],[45,4],[46,7],[47,30],[48,36],[49,24],[50,18],[51,14],[52,12],[53,22],[54,31],[55,16],[56,6],[57,4],[58,3],[59,4],[60,7],[61,44],[62,26],[63,20],[64,13],[65,16],[66,13],[67,21],[68,27],[69,17],[70,7],[71,4],[72,4],[73,4],[74,9],[75,38],[76,25],[77,11],[78,23],[79,10],[80,13],[81,23],[82,23],[83,17],[84,5],[85,1]];
        h = '<rect x="0" y="646" width="1294" height="119.500" fill="none" stroke="#d3d8e3" stroke-width="2"/>' + gridV(647, 765) + dashV(647, 765);
        h += ln(0, 760.5, 1294, 760.5, '#e4e5ea');
        vols.forEach(v => h += `<rect x="${11.5 * v[0] - 4}" y="${760 - v[1]}" width="8" height="${v[1]}" fill="#0a7cff"/>`);
        h += ln(1308.5, 647, 1308.5, 761, '#555');
        for (let y = 655; y < 760; y += 13) h += ln(1303, y, 1308, y, '#555');
        h += ln(1295, 694, 1308, 694, '#555') + ln(1295, 760.5, 1308, 760.5, '#555');
        h += '<text x="1312" y="764">0</text>';
        h += '<rect x="0" y="766" width="1366" height="2" fill="#3d4f74"/>';
        document.getElementById('volPlot').innerHTML = h;
    </script>
</body>
</html>
